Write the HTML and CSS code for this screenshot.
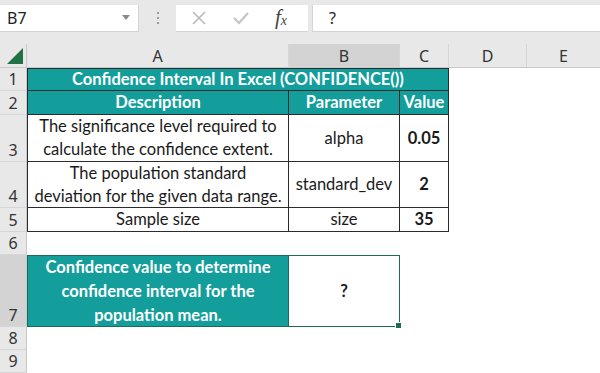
FILE: index.html
```html
<!DOCTYPE html>
<html lang="en">

  <head>
    <meta charset="UTF-8">
    <meta name="viewport" content="width=device-width, initial-scale=1.0">
    <title>Confidence Interval In Excel</title>
    <link rel="stylesheet" href="styles.css">
  </head>

  <body>
    <div id="formula-bar">
      <div class="name-box">
        <span>B7</span>
        <svg class="caret" width="8" height="5" viewBox="0 0 8 5"><path d="M0 0h8L4 5z" fill="#8a8a8a"/></svg>
      </div>
      <div class="grip">
        <i></i><i></i><i></i>
      </div>
      <div class="fx-box">
        <svg width="16" height="14" viewBox="0 0 16 14"><path d="M2 1l12 12M14 1L2 13" stroke="#b9b9b9" stroke-width="1.6" fill="none"/></svg>
        <svg width="18" height="14" viewBox="0 0 18 14"><path d="M2 7l5 5L16 2" stroke="#c4c4c4" stroke-width="2.2" fill="none"/></svg>
        <span class="fx">f<sub>x</sub></span>
      </div>
      <div class="formula-input">?</div>
    </div>

    <div id="sheet">
      <div class="corner"><svg width="16" height="16" viewBox="0 0 16 16"><path d="M16 0V16H0z" fill="#207245"/></svg></div>
      <div class="col-head">A</div>
      <div class="col-head selected">B</div>
      <div class="col-head">C</div>
      <div class="col-head">D</div>
      <div class="col-head last">E</div>

      <!-- row 1 -->
      <div class="row-head">1</div>
      <div class="cell teal bold first top span3">Confidence Interval In Excel (CONFIDENCE())</div>
      <div class="blank span2"></div>

      <!-- row 2 -->
      <div class="row-head">2</div>
      <div class="cell teal bold first">Description</div>
      <div class="cell teal bold">Parameter</div>
      <div class="cell teal bold">Value</div>
      <div class="blank span2"></div>

      <!-- row 3 -->
      <div class="row-head">3</div>
      <div class="cell first">The significance level required to<br>calculate the confidence extent.</div>
      <div class="cell">alpha</div>
      <div class="cell bold">0.05</div>
      <div class="blank span2"></div>

      <!-- row 4 -->
      <div class="row-head">4</div>
      <div class="cell first">The population standard<br>deviation for the given data range.</div>
      <div class="cell">standard_dev</div>
      <div class="cell bold">2</div>
      <div class="blank span2"></div>

      <!-- row 5 -->
      <div class="row-head">5</div>
      <div class="cell first">Sample size</div>
      <div class="cell">size</div>
      <div class="cell bold">35</div>
      <div class="blank span2"></div>

      <!-- row 6 -->
      <div class="row-head">6</div>
      <div class="blank span5"></div>

      <!-- row 7 -->
      <div class="row-head selected">7</div>
      <div class="cell teal bold result">Confidence value to determine<br>confidence interval for the<br>population mean.</div>
      <div class="cell bold active">?<span class="handle"></span></div>
      <div class="blank span3"></div>

      <!-- row 8 -->
      <div class="row-head">8</div>
      <div class="blank span5"></div>

      <!-- row 9 -->
      <div class="row-head">9</div>
      <div class="blank span5"></div>
    </div>
  </body>

</html>
```

FILE: styles.css
```css
body {
  margin: 0;
  width: 600px;
  height: 373px;
  overflow: hidden;
  background-color: #fff;
  font-family: Lato, "Noto Sans", sans-serif;
}

#formula-bar {
  display: flex;
  align-items: center;
  height: 44px;
  padding-bottom: 8px;
  box-sizing: border-box;
  background-color: #e8e8e8;
}

.name-box {
  display: flex;
  align-items: center;
  justify-content: space-between;
  width: 139px;
  height: 27px;
  padding: 0 8px 0 7px;
  box-sizing: border-box;
  background-color: #fff;
  border-right: 1px solid #d4d4d4;
  border-bottom: 1px solid #d4d4d4;
  font-family: "Noto Sans", sans-serif;
  font-size: 16px;
  color: #222;
}

.grip {
  display: flex;
  flex-direction: column;
  gap: 3px;
  margin: 0 17px 0 18px;
}

.grip i {
  width: 2px;
  height: 2px;
  background-color: #9a9a9a;
}

.fx-box {
  display: flex;
  align-items: center;
  gap: 25px;
  width: 132px;
  height: 27px;
  padding-left: 15px;
  box-sizing: border-box;
  background-color: #fff;
  border-bottom: 1px solid #d4d4d4;
}

.fx {
  font-family: "Liberation Serif", serif;
  font-style: italic;
  font-size: 21px;
  color: #444;
}

.fx sub {
  font-size: 14px;
  vertical-align: -1px;
}

.formula-input {
  flex: 1;
  height: 27px;
  margin-left: 4px;
  padding-left: 16px;
  line-height: 27px;
  box-sizing: border-box;
  background-color: #fff;
  border-left: 1px solid #d4d4d4;
  border-bottom: 1px solid #d4d4d4;
  font-family: "Noto Sans", sans-serif;
  font-size: 16px;
  color: #222;
}

#sheet {
  display: grid;
  grid-template-columns: 27px 262px 111px 49px 78px 73px;
  grid-template-rows: 24px 23px 24px 47px 46px 24px 23px 72px 23px 23px;
}

.corner {
  display: flex;
  align-items: flex-end;
  justify-content: flex-end;
  padding: 0 3px 3px 0;
  background-color: #e8e8e8;
  border-right: 1px solid #c9c9c9;
  border-bottom: 1px solid #c9c9c9;
}

.col-head,
.row-head {
  display: flex;
  align-items: center;
  justify-content: center;
  background-color: #e8e8e8;
  font-family: "Noto Sans", sans-serif;
  font-size: 16px;
  color: #333;
}

.col-head {
  border-right: 1px solid #d6d6d6;
  border-bottom: 1px solid #c9c9c9;
}

.col-head.last {
  border-right: 0;
}

.row-head {
  border-right: 1px solid #c9c9c9;
  border-bottom: 1px solid #d6d6d6;
  align-items: flex-end;
  line-height: 22px;
}

.col-head.selected,
.row-head.selected {
  background-color: #d3d3d3;
}

.cell {
  display: flex;
  align-items: center;
  justify-content: center;
  text-align: center;
  padding: 0 2px;
  font-size: 16.5px;
  line-height: 23px;
  color: #1a1a1a;
  border-right: 1px solid #2b2b2b;
  border-bottom: 1px solid #2b2b2b;
  white-space: nowrap;
}

.cell.first {
  border-left: 1px solid #2b2b2b;
}

.cell.top {
  border-top: 1px solid #2b2b2b;
}

.teal {
  background-color: #139e9b;
  color: #fff;
}

.bold {
  font-weight: 700;
}

.span2 {
  grid-column: span 2;
}

.span3 {
  grid-column: span 3;
}

.span5 {
  grid-column: span 5;
}

.result {
  border: 1px solid #1d6b52;
  line-height: 24px;
}

.active {
  position: relative;
  border: 1.5px solid #1e6b4f;
  border-left: 0;
}

.handle {
  position: absolute;
  right: -3px;
  bottom: -3px;
  width: 5px;
  height: 5px;
  background-color: #1e6b4f;
  border: 1px solid #fff;
}
```
